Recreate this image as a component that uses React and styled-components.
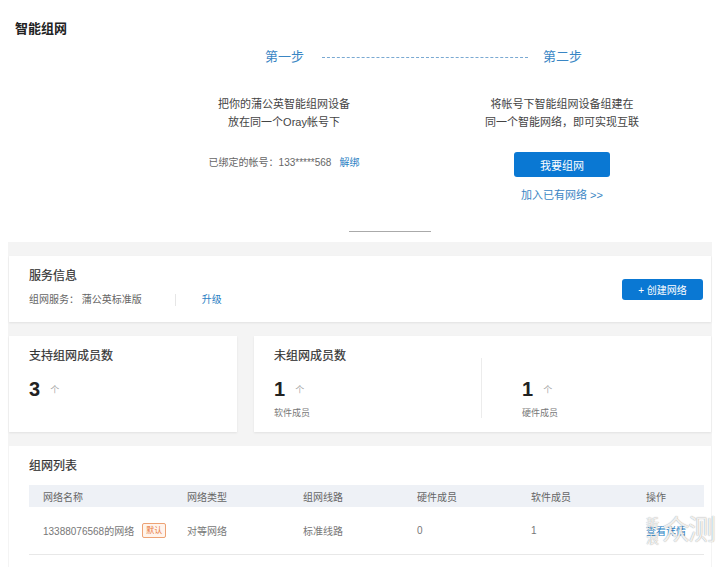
import styled, { createGlobalStyle } from "styled-components"

const GlobalStyle = createGlobalStyle`
	html, body {
		margin: 0;
		padding: 0;
		background: #fff;
	}
	body {
		font-family: "Liberation Sans", "Noto Sans CJK SC", sans-serif;
		color: #333;
		width: 720px;
		height: 567px;
		overflow: hidden;
	}
`

const steps = [
	{
		label: "第一步",
		lines: ["把你的蒲公英智能组网设备", "放在同一个Oray帐号下"],
	},
	{
		label: "第二步",
		lines: ["将帐号下智能组网设备组建在", "同一个智能网络，即可实现互联"],
	},
]

const columns = [
	{ title: "网络名称", width: 144 },
	{ title: "网络类型", width: 116 },
	{ title: "组网线路", width: 114 },
	{ title: "硬件成员", width: 114 },
	{ title: "软件成员", width: 115 },
	{ title: "操作", width: 72 },
]

export default function App() {
	return (
		<Page>
			<GlobalStyle />
			<Header>
				<PageTitle>智能组网</PageTitle>
				<StepRow>
					<StepLabel>{steps[0].label}</StepLabel>
					<DashLine />
					<StepLabel>{steps[1].label}</StepLabel>
				</StepRow>
				<StepGrid>
					<StepColumn>
						<StepText>
							{steps[0].lines.map((l) => (
								<div key={l}>{l}</div>
							))}
						</StepText>
						<BoundAccount>
							已绑定的帐号：133*****568
							<TextLink $spaced>解绑</TextLink>
						</BoundAccount>
					</StepColumn>
					<StepColumn>
						<StepText>
							{steps[1].lines.map((l) => (
								<div key={l}>{l}</div>
							))}
						</StepText>
						<PrimaryButton>我要组网</PrimaryButton>
						<JoinLink>加入已有网络 &gt;&gt;</JoinLink>
					</StepColumn>
				</StepGrid>
				<Underline />
			</Header>

			<GrayArea>
				<ServiceCard>
					<div>
						<CardTitle>服务信息</CardTitle>
						<ServiceLine>
							<span>组网服务： 蒲公英标准版</span>
							<VDivider />
							<TextLink>升级</TextLink>
						</ServiceLine>
					</div>
					<CreateButton>+ 创建网络</CreateButton>
				</ServiceCard>

				<StatsRow>
					<StatCard>
						<CardTitle>支持组网成员数</CardTitle>
						<Count>
							3<Unit>个</Unit>
						</Count>
					</StatCard>
					<StatCard>
						<CardTitle>未组网成员数</CardTitle>
						<StatSplit>
							<StatCell>
								<Count>
									1<Unit>个</Unit>
								</Count>
								<StatCaption>软件成员</StatCaption>
							</StatCell>
							<StatCell $divided>
								<Count>
									1<Unit>个</Unit>
								</Count>
								<StatCaption>硬件成员</StatCaption>
							</StatCell>
						</StatSplit>
					</StatCard>
				</StatsRow>

				<ListCard>
					<CardTitle>组网列表</CardTitle>
					<Table>
						<HeadRow>
							{columns.map((c) => (
								<Cell key={c.title} $w={c.width}>
									{c.title}
								</Cell>
							))}
						</HeadRow>
						<BodyRow>
							<Cell $w={144}>
								13388076568的网络
								<Tag>默认</Tag>
							</Cell>
							<Cell $w={116}>对等网络</Cell>
							<Cell $w={114}>标准线路</Cell>
							<Cell $w={114}>0</Cell>
							<Cell $w={115}>1</Cell>
							<Cell $w={72}>
								<TextLink>查看详情</TextLink>
							</Cell>
						</BodyRow>
					</Table>
				</ListCard>
			</GrayArea>

			<Watermark>
				<WatermarkSmall>
					<span>新</span>
					<span>浪</span>
				</WatermarkSmall>
				<WatermarkBig>众测</WatermarkBig>
			</Watermark>
		</Page>
	)
}

const Page = styled.div`
	position: relative;
	width: 720px;
	height: 567px;
	overflow: hidden;
	background: #fff;
`

const Header = styled.section`
	height: 242px;
	padding: 20px 0 0 15px;
	box-sizing: border-box;
	display: flex;
	flex-direction: column;
`

const PageTitle = styled.h1`
	margin: 0;
	font-size: 13px;
	font-weight: bold;
	color: #222;
	line-height: 18px;
`

const StepRow = styled.div`
	display: flex;
	align-items: center;
	margin: 11px 0 0 250px;
	height: 16px;
`

const StepLabel = styled.span`
	font-size: 13px;
	color: #3a86c4;
	line-height: 16px;
	white-space: nowrap;
`

const DashLine = styled.span`
	width: 206px;
	margin: 0 15px 0 18px;
	border-top: 1px dashed #7aa9d2;
`

const StepGrid = styled.div`
	display: grid;
	grid-template-columns: 278px 278px;
	margin: 30px 0 0 130px;
`

const StepColumn = styled.div`
	display: flex;
	flex-direction: column;
	align-items: center;
`

const StepText = styled.div`
	font-size: 11px;
	line-height: 18px;
	color: #444;
	text-align: center;
`

const BoundAccount = styled.div`
	margin-top: 25px;
	font-size: 10px;
	color: #666;
	line-height: 14px;
`

const TextLink = styled.span`
	color: #2b7fc4;
	font-size: 10px;
	margin-left: ${(p) => (p.$spaced ? "8px" : "0")};
	cursor: pointer;
`

const PrimaryButton = styled.button`
	margin-top: 21px;
	width: 96px;
	height: 25px;
	border: none;
	border-radius: 3px;
	background: #0a78d3;
	color: #fff;
	font-family: inherit;
	font-size: 11px;
	cursor: pointer;
`

const JoinLink = styled.div`
	margin-top: 11px;
	font-size: 11px;
	color: #3a86c4;
	line-height: 14px;
`

const Underline = styled.div`
	width: 82px;
	margin: 29px 0 0 334px;
	border-top: 1px solid #aaa;
`

const GrayArea = styled.main`
	width: 704px;
	margin-left: 8px;
	background: #f4f4f4;
	padding: 14px 1px 0 1px;
	box-sizing: border-box;
	display: flex;
	flex-direction: column;
	gap: 14px;
	height: 325px;
`

const Card = styled.div`
	background: #fff;
	box-shadow: 0 1px 2px rgba(0, 0, 0, 0.08);
	box-sizing: border-box;
`

const ServiceCard = styled(Card)`
	height: 66px;
	padding: 12px 8px 0 20px;
	display: flex;
	justify-content: space-between;
	align-items: flex-start;
`

const CardTitle = styled.div`
	font-size: 12px;
	font-weight: normal;
	color: #333;
	line-height: 16px;
	-webkit-text-stroke: 0.2px #333;
`

const ServiceLine = styled.div`
	display: flex;
	align-items: center;
	margin-top: 9px;
	font-size: 10px;
	color: #666;
	line-height: 14px;
`

const VDivider = styled.span`
	width: 1px;
	height: 12px;
	background: #e6e6e6;
	margin: 0 26px 0 33px;
`

const CreateButton = styled.button`
	margin-top: 11px;
	width: 81px;
	height: 21px;
	border: none;
	border-radius: 3px;
	background: #0a78d3;
	color: #fff;
	font-family: inherit;
	font-size: 10px;
	cursor: pointer;
`

const StatsRow = styled.div`
	display: flex;
	gap: 17px;
`

const StatCard = styled(Card)`
	height: 96px;
	padding: 12px 20px 0 20px;
	&:first-child {
		width: 228px;
	}
	&:last-child {
		flex: 1;
	}
`

const StatSplit = styled.div`
	display: flex;
`

const StatCell = styled.div`
	flex: 1;
	${(p) =>
		p.$divided &&
		`
		border-left: 1px solid #ececec;
		margin-top: -6px;
		padding: 6px 0 0 40px;
		height: 60px;
		box-sizing: border-box;
		flex: 0 0 210px;
	`}
`

const Count = styled.div`
	margin-top: 12px;
	font-size: 20px;
	font-weight: bold;
	color: #222;
	line-height: 22px;
	display: flex;
	align-items: center;
`

const Unit = styled.span`
	font-size: 9px;
	font-weight: normal;
	color: #aaa;
	margin-left: 10px;
	margin-top: 3px;
`

const StatCaption = styled.div`
	margin-top: 6px;
	font-size: 9px;
	color: #777;
	line-height: 12px;
`

const ListCard = styled(Card)`
	flex: 1;
	padding: 12px 7px 0 20px;
	box-shadow: none;
`

const Table = styled.div`
	margin-top: 11px;
	font-size: 10px;
	color: #777;
`

const HeadRow = styled.div`
	display: flex;
	align-items: center;
	height: 22px;
	background: #eef1f6;
	padding-left: 14px;
	color: #666;
`

const BodyRow = styled.div`
	display: flex;
	align-items: center;
	height: 47px;
	padding-left: 14px;
	border-bottom: 1px solid #e8e8e8;
`

const Cell = styled.div`
	flex: 0 0 ${(p) => p.$w}px;
	display: flex;
	align-items: center;
	white-space: nowrap;
`

const Tag = styled.span`
	margin-left: 8px;
	padding: 0 3px;
	height: 13px;
	line-height: 13px;
	font-size: 8px;
	color: #e8793c;
	background: #fff4ec;
	border: 1px solid #eda274;
	border-radius: 2px;
`

const Watermark = styled.div`
	position: absolute;
	left: 646px;
	top: 516px;
	display: flex;
	align-items: center;
	gap: 3px;
	pointer-events: none;
	color: rgba(255, 255, 255, 0.85);
	text-shadow: 0 0 1px rgba(0, 0, 0, 0.45);
`

const WatermarkSmall = styled.div`
	display: flex;
	flex-direction: column;
	font-size: 13px;
	line-height: 15px;
`

const WatermarkBig = styled.div`
	font-size: 28px;
	line-height: 30px;
	letter-spacing: -2px;
`
